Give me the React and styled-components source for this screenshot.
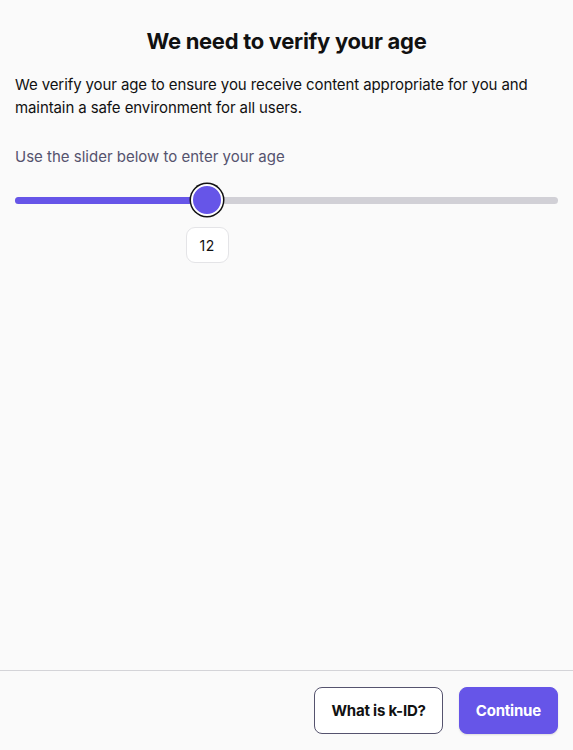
import styled, { createGlobalStyle } from 'styled-components'

const Global = createGlobalStyle`
    html, body {
        margin: 0;
        padding: 0;
        background: #fafafa;
    }
    body {
        font-family: Inter, "Noto Sans", sans-serif;
        color: #111;
    }
`

const Page = styled.div`
    height: 750px;
    display: flex;
    flex-direction: column;
    background: #fafafa;
`

const Body = styled.main`
    flex: 1;
    padding: 26px 15px 0;
`

const Title = styled.h1`
    margin: 0;
    text-align: center;
    font-size: 22px;
    font-weight: 700;
    letter-spacing: -0.3px;
    line-height: 30px;
`

const Text = styled.p`
    margin: 17px 0 0;
    font-size: 15px;
    line-height: 23px;
    letter-spacing: -0.1px;
    color: #111;
`

const Label = styled.div`
    margin-top: 27px;
    font-size: 15px;
    line-height: 22px;
    color: #55536e;
`

const SliderWrap = styled.div`
    position: relative;
    margin-top: 16px;
    height: 32px;
`

const Track = styled.div`
    position: absolute;
    left: 0;
    right: 0;
    top: 13px;
    height: 7px;
    border-radius: 4px;
    background: #d1d0d6;
`

const Fill = styled.div`
    position: absolute;
    left: 0;
    top: 0;
    bottom: 0;
    border-radius: 4px;
    background: #6655e8;
`

const Thumb = styled.div`
    position: absolute;
    top: 0;
    width: 28px;
    height: 28px;
    margin-left: -16px;
    border-radius: 50%;
    background: #6655e8;
    border: 2px solid #fff;
    box-shadow: 0 0 0 1.5px #111;
`

const Bubble = styled.div`
    position: absolute;
    top: 43px;
    margin-left: -21px;
    width: 43px;
    height: 36px;
    box-sizing: border-box;
    display: flex;
    align-items: center;
    justify-content: center;
    background: #fff;
    border: 1px solid #e4e4e7;
    border-radius: 9px;
    font-size: 14px;
    letter-spacing: 0.5px;
`

const Footer = styled.footer`
    border-top: 1px solid #d4d4d8;
    padding: 16px 15px 16px;
    display: flex;
    justify-content: flex-end;
    gap: 16px;
`

const Button = styled.button`
    height: 47px;
    padding: 0 16px;
    border-radius: 8px;
    font-family: Inter, "Noto Sans", sans-serif;
    font-size: 15px;
    font-weight: 700;
    letter-spacing: -0.2px;
    cursor: pointer;
    border: 1px solid ${p => (p.primary ? '#6655e8' : '#55536e')};
    background: ${p => (p.primary ? '#6655e8' : '#fff')};
    color: ${p => (p.primary ? '#fff' : '#111')};
    box-shadow: ${p => (p.primary ? '0 1px 2px rgba(0,0,0,0.12)' : 'none')};
`

const App = () => {
    const age = 12
    const pct = 35.3

    return (
        <Page>
            <Global />
            <Body>
                <Title>We need to verify your age</Title>
                <Text>
                    We verify your age to ensure you receive content appropriate for you and
                    maintain a safe environment for all users.
                </Text>
                <Label>Use the slider below to enter your age</Label>
                <SliderWrap>
                    <Track>
                        <Fill style={{ width: `${pct}%` }} />
                    </Track>
                    <Thumb style={{ left: `${pct}%` }} />
                    <Bubble style={{ left: `${pct}%` }}>{age}</Bubble>
                </SliderWrap>
            </Body>
            <Footer>
                <Button>What is k-ID?</Button>
                <Button primary>Continue</Button>
            </Footer>
        </Page>
    )
}

export default App
